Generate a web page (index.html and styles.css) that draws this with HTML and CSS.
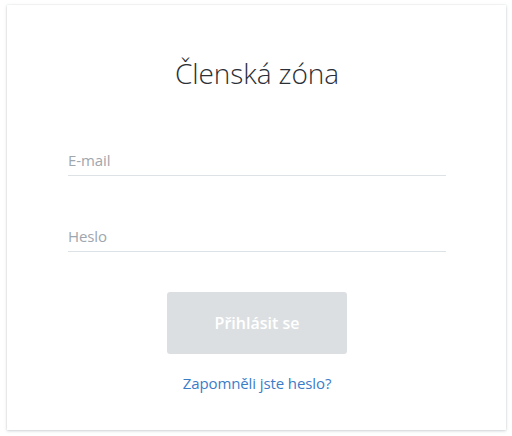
FILE: index.html
```html
<!DOCTYPE html>
<html lang="cs">
<head>
<meta charset="utf-8">
<link rel="stylesheet" href="styles.css">
</head>
<body>
<div class="card">
  <h1 class="title">Členská zóna</h1>
  <form class="form">
    <div class="field"><span class="placeholder">E-mail</span></div>
    <div class="field"><span class="placeholder">Heslo</span></div>
    <div class="actions">
      <button type="button" class="btn">Přihlásit se</button>
      <a class="link" href="#">Zapomněli jste heslo?</a>
    </div>
  </form>
</div>
</body>
</html>
```
FILE: styles.css
```css
html, body { margin: 0; padding: 0; background: #ffffff; }
body { padding: 5px 6px 6px 7px; font-family: "Open Sans", "Noto Sans", sans-serif; }
.card {
  width: 499px;
  height: 425px;
  box-sizing: border-box;
  background: #fff;
  box-shadow: 0 1px 3px rgba(120, 135, 150, 0.35), 0 0 1px rgba(120,135,150,0.3);
  padding: 0 60px 0 61px;
  display: flex;
  flex-direction: column;
}
.title {
  margin: 48px 0 0;
  text-align: center;
  font-size: 28px;
  font-weight: 300;
  line-height: 40px;
  color: #2b2f36;
  letter-spacing: -0.1px;
}
.form { display: flex; flex-direction: column; margin-top: 46px; }
.field {
  height: 37px;
  box-sizing: border-box;
  padding-bottom: 5px;
  border-bottom: 1px solid #dde2e6;
  display: flex;
  align-items: flex-end;
  margin-bottom: 39px;
}
.field + .field { margin-bottom: 0; }
.placeholder { font-size: 15px; line-height: 20px; color: #9ea6ae; letter-spacing: -0.1px; }
.actions { display: flex; flex-direction: column; align-items: center; margin-top: 40px; }
.btn {
  width: 180px;
  height: 62px;
  border: none;
  border-radius: 3px;
  background: #dcdfe2;
  color: #fff;
  font-family: inherit;
  font-size: 16px;
  font-weight: 600;
}
.link {
  margin-top: 19px;
  font-size: 15px;
  color: #3b7cc9;
  text-decoration: none;
  letter-spacing: -0.1px;
}
```
